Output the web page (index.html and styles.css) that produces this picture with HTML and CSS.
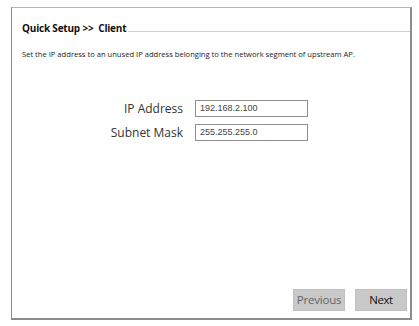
FILE: index.html
```html
<!DOCTYPE html>
<html>
<head>
<meta charset="utf-8">
<link rel="stylesheet" href="styles.css">
</head>
<body>
<div class="panel">
  <div class="title-row">
    <span class="title">Quick Setup &gt;&gt;&nbsp; Client</span>
    <span class="rule"></span>
  </div>
  <p class="desc">Set the IP address to an unused IP address belonging to the network segment of upstream AP.</p>
  <div class="form">
    <div class="row">
      <span class="label">IP Address</span>
      <span class="input">192.168.2.100</span>
    </div>
    <div class="row">
      <span class="label">Subnet Mask</span>
      <span class="input">255.255.255.0</span>
    </div>
  </div>
  <div class="buttons">
    <span class="btn prev">Previous</span>
    <span class="btn next">Next</span>
  </div>
</div>
</body>
</html>
```

FILE: styles.css
```css
html, body {
  margin: 0;
  padding: 0;
  background: #ffffff;
}
body {
  width: 419px;
  height: 326px;
  overflow: hidden;
  font-family: "Open Sans", "Noto Sans", sans-serif;
  color: #222;
}
.panel {
  box-sizing: border-box;
  margin: 7px 0 0 11px;
  width: 401px;
  height: 313px;
  border-top: 1px solid #b5b5b5;
  border-left: 1px solid #8a8a8a;
  border-right: 2px solid #8c8c8c;
  border-bottom: 2px solid #8c8c8c;
  padding: 14px 0 0 10px;
  display: flex;
  flex-direction: column;
}
.title-row {
  display: flex;
  align-items: center;
  height: 12px;
}
.title {
  font-weight: 700;
  font-size: 10px;
  color: #111;
  letter-spacing: -0.2px;
  line-height: 12px;
  white-space: nowrap;
}
.rule {
  flex: 1;
  height: 1px;
  background: #cfcfcf;
  margin-top: 7px;
  margin-left: 2px;
}
.desc {
  margin: 15px 0 0 0;
  font-size: 7.6px;
  line-height: 10px;
  color: #222;
  white-space: nowrap;
}
.form {
  margin-top: 41px;
  display: flex;
  flex-direction: column;
  gap: 7px;
}
.row {
  display: flex;
  align-items: center;
  height: 17px;
}
.label {
  width: 161px;
  text-align: right;
  font-size: 12px;
  color: #333;
  white-space: nowrap;
}
.input {
  box-sizing: border-box;
  margin-left: 12px;
  width: 113px;
  height: 17px;
  border: 1px solid #8f8f8f;
  font-family: "Liberation Sans", Arial, sans-serif;
  font-size: 9px;
  color: #444;
  padding-left: 4px;
  line-height: 15px;
}
.buttons {
  margin-top: auto;
  margin-bottom: 7px;
  display: flex;
  justify-content: flex-end;
  gap: 10px;
  padding-right: 3px;
}
.btn {
  box-sizing: border-box;
  width: 52px;
  height: 22px;
  background: #c9c9c9;
  border: 1px solid #c0c0c0;
  font-size: 11.5px;
  line-height: 20px;
  text-align: center;
}
.prev { color: #666; letter-spacing: -0.2px; }
.next { color: #111; letter-spacing: -0.4px; }
```
